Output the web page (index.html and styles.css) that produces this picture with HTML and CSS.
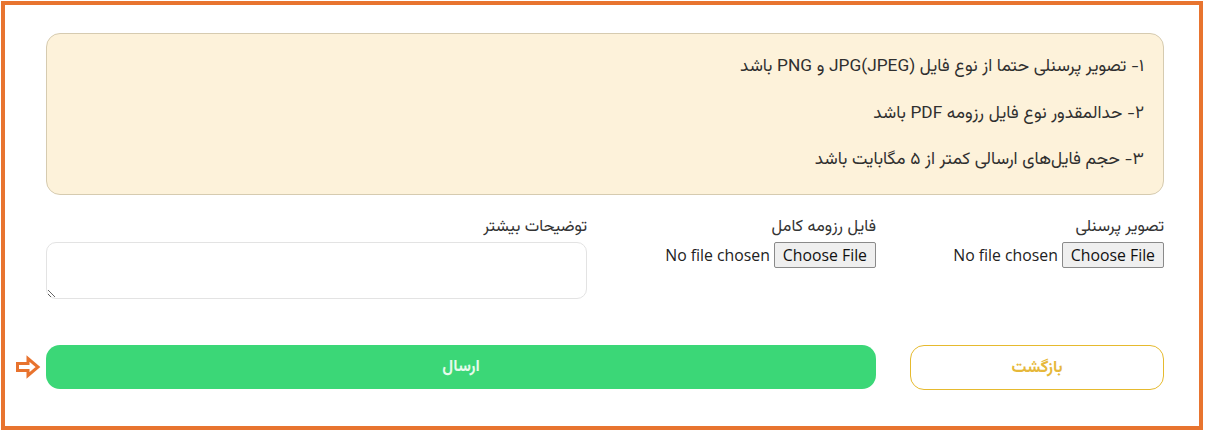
FILE: index.html
```html
<!DOCTYPE html>
<html lang="fa" dir="rtl">
<head>
<meta charset="utf-8">
<title>ارسال رزومه</title>
<link rel="stylesheet" href="styles.css">
</head>
<body>
<div class="frame">
  <div class="notice">
    <p class="notice-line">۱- تصویر پرسنلی حتما از نوع فایل JPG(JPEG) و PNG باشد</p>
    <p class="notice-line">۲- حدالمقدور نوع فایل رزومه PDF باشد</p>
    <p class="notice-line">۳- حجم فایل‌های ارسالی کمتر از ۵ مگابایت باشد</p>
  </div>
  <div class="fields">
    <div class="field field-narrow">
      <label class="field-label">تصویر پرسنلی</label>
      <input class="file-input" type="file">
    </div>
    <div class="field field-narrow">
      <label class="field-label">فایل رزومه کامل</label>
      <input class="file-input" type="file">
    </div>
    <div class="field field-wide">
      <label class="field-label">توضیحات بیشتر</label>
      <textarea class="notes"></textarea>
    </div>
  </div>
  <div class="actions">
    <button class="btn btn-back" type="button">بازگشت</button>
    <div class="submit-wrap">
      <button class="btn btn-submit" type="button">ارسال</button>
      <svg class="pointer" width="26" height="24" viewBox="0 0 26 24">
        <path d="M2.5 8.5 H13 V3.5 L23 12 L13 20.5 V15.5 H2.5 Z" fill="#fff" stroke="#E8732E" stroke-width="3" stroke-linejoin="miter"/>
      </svg>
    </div>
  </div>
</div>
</body>
</html>
```

FILE: styles.css
```css
* { box-sizing: border-box; }

body {
  margin: 0;
  background: #ffffff;
  font-family: "Vazirmatn", "Noto Sans Arabic", "DejaVu Sans", sans-serif;
  color: #333333;
}

.frame {
  margin: 1px 3px 1px 1px;
  width: 1202px;
  height: 429px;
  border: 4px solid #E8742F;
  padding: 28px 35px 0 41px;
}

.notice {
  height: 162px;
  background: #FDF2DA;
  border: 1px solid #D6CBB0;
  border-radius: 14px;
  padding: 10px 19px 0 19px;
}

.notice-line {
  margin: 0;
  height: 46.5px;
  line-height: 46.5px;
  font-size: 17.3px;
  color: #2f2f2f;
}

.fields {
  display: grid;
  grid-template-columns: 258px 259px 541px;
  column-gap: 30px;
  margin-top: 22px;
}

.field {
  display: flex;
  flex-direction: column;
}

.field-label {
  font-size: 16.5px;
  line-height: 20px;
  height: 20px;
  color: #333333;
  margin-bottom: 5px;
}

.file-input {
  font-family: "Open Sans", "Noto Sans", sans-serif;
  font-size: 15.8px;
  color: #222222;
  height: 26px;
  direction: rtl;
}

.file-input::file-selector-button {
  font-family: "Open Sans", "Noto Sans", sans-serif;
  font-size: 15.8px;
  color: #111111;
  background: #efefef;
  border: 1px solid #8a8a8a;
  border-radius: 2px;
  height: 26px;
  padding: 0 8px;
  margin: 0 0 0 4px;
}

.notes {
  height: 57px;
  width: 100%;
  border: 1px solid #e3e3e3;
  border-radius: 10px;
  resize: vertical;
  font-family: inherit;
  margin: 0;
}

.actions {
  display: flex;
  gap: 34px;
  margin-top: 46px;
  align-items: flex-start;
}

.btn {
  font-family: inherit;
  font-weight: bold;
  font-size: 16.5px;
  cursor: pointer;
}

.btn-back {
  width: 254px;
  height: 45px;
  background: #ffffff;
  border: 1px solid #E6BA2E;
  border-radius: 14px;
  color: #E6B83A;
}

.submit-wrap {
  position: relative;
  width: 830px;
}

.btn-submit {
  width: 830px;
  height: 44px;
  background: #3BD777;
  border: none;
  border-radius: 14px;
  color: #E6FAEC;
}

.pointer {
  position: absolute;
  left: -31px;
  top: 10px;
}
```
